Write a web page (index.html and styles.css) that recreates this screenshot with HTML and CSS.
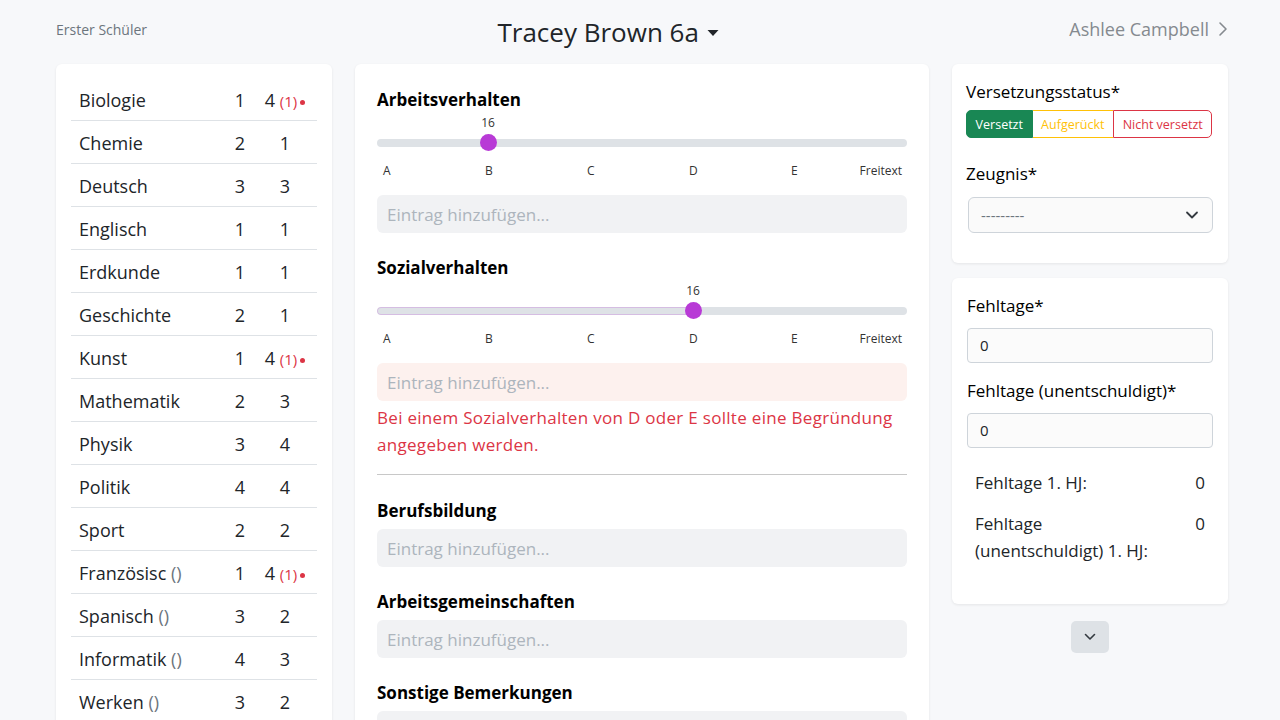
FILE: index.html
```html
<!DOCTYPE html>
<html lang="de">
<head>
<meta charset="utf-8">
<title>Tracey Brown 6a</title>
<link rel="stylesheet" href="styles.css">
</head>
<body>
<header class="topbar">
  <div class="nav-prev">Erster Schüler</div>
  <div class="student">Tracey Brown 6a
    <svg class="caret" width="12" height="8" viewBox="0 0 12 8"><path d="M0.5 1 L11.5 1 L6 7 Z" fill="#212529"/></svg>
  </div>
  <div class="nav-next">Ashlee Campbell
    <svg class="chev-right" width="10" height="16" viewBox="0 0 10 16"><path d="M2 2 L8 8 L2 14" fill="none" stroke="#858a8f" stroke-width="1.6" stroke-linecap="round" stroke-linejoin="round"/></svg>
  </div>
</header>

<main class="layout">
  <section class="card grades">
    <div class="grow"><span class="subj">Biologie</span><span class="g1">1</span><span class="g2">4 <span class="flag">(1)</span><span class="dot"></span></span></div>
    <div class="grow"><span class="subj">Chemie</span><span class="g1">2</span><span class="g2">1</span></div>
    <div class="grow"><span class="subj">Deutsch</span><span class="g1">3</span><span class="g2">3</span></div>
    <div class="grow"><span class="subj">Englisch</span><span class="g1">1</span><span class="g2">1</span></div>
    <div class="grow"><span class="subj">Erdkunde</span><span class="g1">1</span><span class="g2">1</span></div>
    <div class="grow"><span class="subj">Geschichte</span><span class="g1">2</span><span class="g2">1</span></div>
    <div class="grow"><span class="subj">Kunst</span><span class="g1">1</span><span class="g2">4 <span class="flag">(1)</span><span class="dot"></span></span></div>
    <div class="grow"><span class="subj">Mathematik</span><span class="g1">2</span><span class="g2">3</span></div>
    <div class="grow"><span class="subj">Physik</span><span class="g1">3</span><span class="g2">4</span></div>
    <div class="grow"><span class="subj">Politik</span><span class="g1">4</span><span class="g2">4</span></div>
    <div class="grow"><span class="subj">Sport</span><span class="g1">2</span><span class="g2">2</span></div>
    <div class="grow"><span class="subj">Französisc <span class="muted">()</span></span><span class="g1">1</span><span class="g2">4 <span class="flag">(1)</span><span class="dot"></span></span></div>
    <div class="grow"><span class="subj">Spanisch <span class="muted">()</span></span><span class="g1">3</span><span class="g2">2</span></div>
    <div class="grow"><span class="subj">Informatik <span class="muted">()</span></span><span class="g1">4</span><span class="g2">3</span></div>
    <div class="grow"><span class="subj">Werken <span class="muted">()</span></span><span class="g1">3</span><span class="g2">2</span></div>
  </section>

  <section class="card remarks">
    <div class="block">
      <h3 class="title">Arbeitsverhalten</h3>
      <div class="slider">
        <div class="track"></div>
        <div class="thumb" style="left: 111px"><span class="val">16</span></div>
      </div>
      <div class="ticks"><span>A</span><span>B</span><span>C</span><span>D</span><span>E</span><span class="free">Freitext</span></div>
      <div class="entry gap16">Eintrag hinzufügen...</div>
    </div>

    <div class="block">
      <h3 class="title">Sozialverhalten</h3>
      <div class="slider">
        <div class="track"><div class="fill" style="width: 316px"></div></div>
        <div class="thumb" style="left: 316px"><span class="val">16</span></div>
      </div>
      <div class="ticks"><span>A</span><span>B</span><span>C</span><span>D</span><span>E</span><span class="free">Freitext</span></div>
      <div class="entry gap16 invalid">Eintrag hinzufügen...</div>
      <p class="error">Bei einem Sozialverhalten von D oder E sollte eine Begründung angegeben werden.</p>
      <hr class="divider">
    </div>

    <div class="block after-hr">
      <h3 class="title">Berufsbildung</h3>
      <div class="entry">Eintrag hinzufügen...</div>
    </div>
    <div class="block">
      <h3 class="title">Arbeitsgemeinschaften</h3>
      <div class="entry">Eintrag hinzufügen...</div>
    </div>
    <div class="block">
      <h3 class="title">Sonstige Bemerkungen</h3>
      <div class="entry">Eintrag hinzufügen...</div>
    </div>
  </section>

  <aside class="side">
    <section class="card status">
      <div class="label">Versetzungsstatus*</div>
      <div class="btn-group">
        <span class="seg seg-ok">Versetzt</span><span class="seg seg-warn">Aufgerückt</span><span class="seg seg-bad">Nicht versetzt</span>
      </div>
      <div class="label mt24">Zeugnis*</div>
      <div class="select">
        <span>---------</span>
        <svg width="14" height="10" viewBox="0 0 14 10"><path d="M2 2.5 L7 7.5 L12 2.5" fill="none" stroke="#343a40" stroke-width="1.8" stroke-linecap="round" stroke-linejoin="round"/></svg>
      </div>
    </section>

    <section class="card absence">
      <div class="label">Fehltage*</div>
      <div class="num-input">0</div>
      <div class="label mt16">Fehltage (unentschuldigt)*</div>
      <div class="num-input">0</div>
      <div class="stat first"><span>Fehltage 1. HJ:</span><span>0</span></div>
      <div class="stat"><span>Fehltage<br>(unentschuldigt) 1. HJ:</span><span>0</span></div>
    </section>

    <div class="more">
      <span class="more-btn">
        <svg width="14" height="10" viewBox="0 0 14 10"><path d="M2.5 2.5 L7 7 L11.5 2.5" fill="none" stroke="#343a40" stroke-width="1.6" stroke-linecap="round" stroke-linejoin="round"/></svg>
      </span>
    </div>
  </aside>
</main>
</body>
</html>
```

FILE: styles.css
```css
* { box-sizing: border-box; }

html, body {
  margin: 0;
  padding: 0;
  height: 720px;
  overflow: hidden;
}

body {
  background: #f7f8fa;
  font-family: "Open Sans", "Noto Sans", sans-serif;
  color: #212529;
}

.topbar {
  height: 64px;
  padding: 0 52px 0 56px;
  display: flex;
  justify-content: space-between;
  align-items: center;
}

.nav-prev {
  font-size: 14px;
  color: #6c757d;
  margin-bottom: 6px;
}

.student {
  font-size: 26px;
  color: #212529;
  display: flex;
  align-items: center;
  gap: 8px;
}

.caret { margin-top: 2px; }

.nav-next {
  font-size: 18px;
  color: #858a8f;
  display: flex;
  align-items: center;
  gap: 9px;
  margin-bottom: 6px;
}

.layout {
  padding: 0 52px 0 56px;
  display: grid;
  grid-template-columns: 276px 574px 276px;
  gap: 23px;
  align-items: start;
}

.card {
  background: #fff;
  border-radius: 6px;
  box-shadow: 0 1px 3px rgba(0, 0, 0, 0.08);
}

/* grades */
.grades {
  padding: 14px 15px 20px;
  min-height: 700px;
}

.grow {
  display: grid;
  grid-template-columns: 1fr 26px 64px;
  align-items: center;
  height: 43px;
  border-bottom: 1px solid #dee2e6;
  font-size: 18px;
  padding: 1px 0 0 8px;
}

.g1, .g2 { text-align: center; white-space: nowrap; }

.flag {
  color: #dc3545;
  font-size: 15px;
}

.dot {
  display: inline-block;
  width: 5px;
  height: 5px;
  border-radius: 50%;
  background: #dc3545;
  margin-left: 3px;
  vertical-align: 2px;
}

.muted { color: #6c757d; }

/* remarks */
.remarks {
  padding: 24px 22px 20px;
  min-height: 700px;
}

.block + .block { margin-top: 23px; }
.block.after-hr { margin-top: 24px; }

.title {
  margin: 0;
  font-size: 17px;
  line-height: 24px;
  font-weight: 700;
  color: #000;
}

.slider {
  position: relative;
  height: 36px;
  margin-top: 3px;
}

.track {
  position: absolute;
  left: 0;
  right: 0;
  bottom: 4px;
  height: 8px;
  border-radius: 4px;
  background: #dee2e6;
  overflow: hidden;
}

.fill {
  height: 100%;
  border-radius: 4px;
  box-shadow: inset 0 0 0 1px rgba(184, 58, 214, 0.22);
}

.thumb {
  position: absolute;
  top: 20px;
  width: 17px;
  height: 17px;
  margin: -1px 0 0 -8.5px;
  border-radius: 50%;
  background: #b83ad6;
}

.val {
  position: absolute;
  top: -19px;
  left: 50%;
  transform: translateX(-50%);
  font-size: 12px;
  line-height: 16px;
  color: #333;
}

.ticks {
  display: flex;
  margin-top: 12px;
  font-size: 12px;
  line-height: 16px;
  color: #333;
}

.ticks span {
  flex: 0 0 102px;
  padding-left: 6px;
}

.ticks span.free {
  flex: 1 1 auto;
  margin-left: -80px;
  padding: 0 5px 0 0;
  text-align: right;
}

.entry {
  margin-top: 6px;
  height: 38px;
  border-radius: 6px;
  background: #f1f2f4;
  color: #adb5bd;
  font-size: 17px;
  display: flex;
  align-items: center;
  padding-left: 10px;
}

.entry.gap16 { margin-top: 16px; }

.entry.invalid { background: #fdf1ee; }

.error {
  margin: 3px 0 0;
  color: #dc3545;
  font-size: 17px;
  line-height: 27px;
  letter-spacing: 0.3px;
}

.divider {
  margin: 16px 0 0;
  border: 0;
  border-top: 1px solid #c8c8c8;
}

/* side */
.side { display: flex; flex-direction: column; }

.status { padding: 16px 15px 30px 14px; }

.label {
  font-size: 17px;
  line-height: 24px;
  color: #000;
}

.mt24 { margin-top: 24px; }
.mt16 { margin-top: 16px; }

.btn-group {
  display: flex;
  margin-top: 6px;
  height: 28px;
}

.seg {
  display: flex;
  align-items: center;
  padding: 0 8.6px;
  font-size: 12.5px;
  white-space: nowrap;
  border: 1px solid;
}

.seg-ok {
  background: #198754;
  border-color: #198754;
  color: #fff;
  border-radius: 5px 0 0 5px;
}

.seg-warn {
  color: #ffc107;
  border-color: #ffc107;
  border-left: 0;
  border-right: 0;
}

.seg-bad {
  color: #dc3545;
  border-color: #dc3545;
  border-radius: 0 5px 5px 0;
}

.select {
  margin: 11px 0 0 2px;
  height: 36px;
  border: 1px solid #ced4da;
  border-radius: 6px;
  background: #fafafa;
  display: flex;
  align-items: center;
  justify-content: space-between;
  padding: 0 13px 0 12px;
  font-size: 15px;
  color: #6c757d;
}

.absence { padding: 16px 15px 40px; margin-top: 15px; }

.num-input {
  margin-top: 10px;
  height: 35px;
  border: 1px solid #ced4da;
  border-radius: 4px;
  background: #fbfbfb;
  display: flex;
  align-items: center;
  padding: 0 0 2px 12px;
  font-size: 15px;
  color: #212529;
}

.num-input + .label { margin-top: 16px; }

.stat {
  display: flex;
  justify-content: space-between;
  align-items: flex-start;
  padding: 0 8px;
  font-size: 17px;
  line-height: 27px;
  margin-top: 14px;
}

.stat.first { margin-top: 21px; }

.more {
  display: flex;
  justify-content: center;
  margin-top: 17px;
}

.more-btn {
  width: 38px;
  height: 32px;
  border-radius: 5px;
  background: #dee2e6;
  display: flex;
  align-items: center;
  justify-content: center;
}
```
